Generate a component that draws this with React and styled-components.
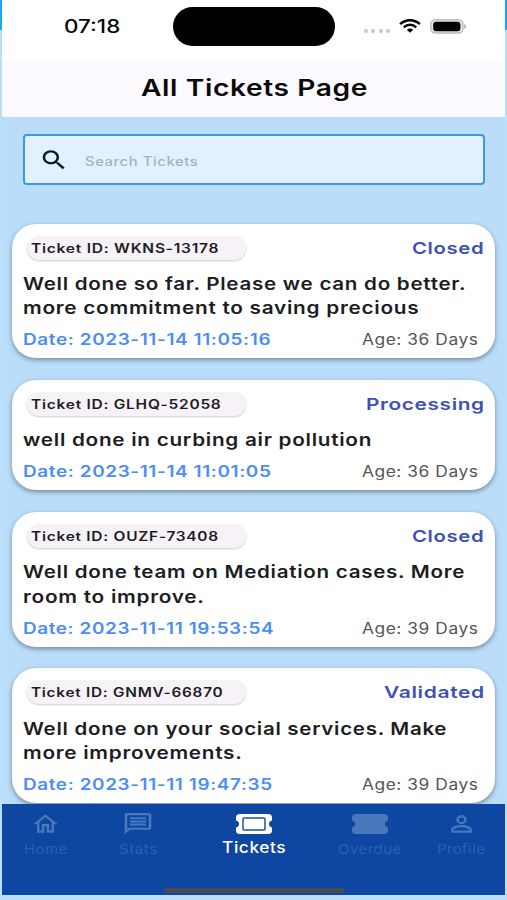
import React, { useLayoutEffect, useRef, useState } from 'react';
import styled, { createGlobalStyle } from 'styled-components';

const tickets = [
    { id: 'WKNS-13178', idWidth: 187, status: 'Closed', statusWidth: 72, lines: [['Well done so far. Please we can do better.', 443], ['more commitment to saving precious', 396]], date: '2023-11-14 11:05:16', dateWidth: 248, age: '36 Days' },
    { id: 'GLHQ-52058', idWidth: 190, status: 'Processing', statusWidth: 118, lines: [['well done in curbing air pollution', 348]], date: '2023-11-14 11:01:05', dateWidth: 248, age: '36 Days' },
    { id: 'OUZF-73408', idWidth: 187, status: 'Closed', statusWidth: 72, lines: [['Well done team on Mediation cases. More', 441], ['room to improve.', 181]], date: '2023-11-11 19:53:54', dateWidth: 250, age: '39 Days' },
    { id: 'GNMV-66870', idWidth: 192, status: 'Validated', statusWidth: 100, lines: [['Well done on your social services. Make', 424], ['more improvements.', 219]], date: '2023-11-11 19:47:35', dateWidth: 249, age: '39 Days' },
];

// sets one line of text to an exact width
function Fit({ width, children }) {
    const ref = useRef(null);
    const [scale, setScale] = useState(1);

    useLayoutEffect(() => {
        const spacing = parseFloat(getComputedStyle(ref.current).letterSpacing) || 0;
        setScale(width / (ref.current.offsetWidth - spacing));
    }, [width])

    return (
        <FitBox $width={width}>
            <FitText ref={ref} style={{ transform: `scaleX(${scale})` }}>{children}</FitText>
        </FitBox>
    );
}

function TicketCard({ ticket }) {
    return (
        <Card>
            <CardTop>
                <TicketId><Fit width={ticket.idWidth}>Ticket ID: {ticket.id}</Fit></TicketId>
                <Status><Fit width={ticket.statusWidth}>{ticket.status}</Fit></Status>
            </CardTop>
            <Message>
                {ticket.lines.map(([text, width]) => (
                    <Fit key={text} width={width}>{text}</Fit>
                ))}
            </Message>
            <CardBottom>
                <TicketDate><Fit width={ticket.dateWidth}>Date: {ticket.date}</Fit></TicketDate>
                <Age><Fit width={116}>Age: {ticket.age}</Fit></Age>
            </CardBottom>
        </Card>
    );
}

export default function App() {
    return (
        <Page>
            <GlobalStyle />
            <Screen>
                <Header>
                    <StatusBar>
                        <Clock><Fit width={56}>07:18</Fit></Clock>
                        <Island />
                        <Signals>
                            <Dots><i /><i /><i /><i /></Dots>
                            <svg width="22" height="14" viewBox="0 0 22 14" fill="none" stroke="#050505" strokeWidth="2.5">
                                <path d="M1.1 5.1C6.8-.1 15.2-.1 20.9 5.1" />
                                <path d="M4.8 8.3c3.6-3.3 8.8-3.3 12.4 0" />
                                <path d="M7.8 10.7c1.8-1.7 4.6-1.7 6.4 0L11 13.7z" fill="#050505" stroke="none" />
                            </svg>
                            <svg width="37" height="15" viewBox="0 0 37 15">
                                <rect x="0.8" y="0.8" width="32.2" height="13.2" rx="4.5" fill="#e4e4e4" stroke="#bdbdbd" strokeWidth="1.4" />
                                <rect x="3.2" y="2.8" width="27.2" height="9.4" rx="3" fill="#000" />
                                <path d="M34.3 5.2c2.4.8 2.4 3.8 0 4.6z" fill="#aaa" />
                            </svg>
                        </Signals>
                    </StatusBar>
                    <Title><Fit width={227}>All Tickets Page</Fit></Title>
                </Header>
                <Search>
                    <svg width="30" height="26" viewBox="0 0 24 24" preserveAspectRatio="none" fill="#10181f">
                        <path d="M15.5 14h-.79l-.28-.27C15.41 12.59 16 11.11 16 9.5 16 5.91 13.09 3 9.5 3S3 5.91 3 9.5 5.91 16 9.5 16c1.61 0 3.09-.59 4.23-1.57l.27.28v.79l5 4.99L20.49 19l-4.99-5zm-6 0C7.01 14 5 11.99 5 9.5S7.01 5 9.5 5 14 7.01 14 9.5 11.99 14 9.5 14z" />
                    </svg>
                    <Placeholder><Fit width={113}>Search Tickets</Fit></Placeholder>
                </Search>
                <List>
                    {tickets.map(t => <TicketCard key={t.id} ticket={t} />)}
                </List>
                <NavBar>
                    <NavItem $width={86}>
                        <NavIcon>
                            <svg width="29" height="26" viewBox="0 0 24 24" preserveAspectRatio="none">
                                <path d="M12 5.69l5 4.5V18h-2v-6H9v6H7v-7.81l5-4.5M12 3L2 12h3v8h6v-6h2v6h6v-8h3L12 3z" />
                            </svg>
                        </NavIcon>
                        <Fit width={43}>Home</Fit>
                    </NavItem>
                    <NavItem $width={100}>
                        <NavIcon>
                            <svg width="32" height="25" viewBox="0 0 24 24" preserveAspectRatio="none">
                                <path d="M4 4h16v12H5.17L4 17.17V4m0-2c-1.1 0-1.99.9-1.99 2L2 22l4-4h14c1.1 0 2-.9 2-2V4c0-1.1-.9-2-2-2H4zm2 10h12v2H6v-2zm0-3h12v2H6V9zm0-3h12v2H6V6z" />
                            </svg>
                        </NavIcon>
                        <Fit width={38}>Stats</Fit>
                    </NavItem>
                    <NavItem $width={132} $active>
                        <NavIcon>
                            <svg width="36" height="20" viewBox="0 0 36 20">
                                <path d="M4 0h28q4 0 4 3.5v3q-3 .8-3 3.5t3 3.5v3q0 3.5-4 3.5H4q-4 0-4-3.5v-3q3-.8 3-3.5T0 6.5v-3Q0 0 4 0z" />
                                <rect x="7" y="4" width="22" height="12" rx="1" fill="none" stroke="#1f539f" strokeWidth="1.5" />
                            </svg>
                        </NavIcon>
                        <Fit width={64}>Tickets</Fit>
                    </NavItem>
                    <NavItem $width={99}>
                        <NavIcon>
                            <svg width="36" height="20" viewBox="0 0 36 20">
                                <path d="M4 0h28q4 0 4 3.5v3q-3 .8-3 3.5t3 3.5v3q0 3.5-4 3.5H4q-4 0-4-3.5v-3q3-.8 3-3.5T0 6.5v-3Q0 0 4 0z" />
                            </svg>
                        </NavIcon>
                        <Fit width={63}>Overdue</Fit>
                    </NavItem>
                    <NavItem $width={84}>
                        <NavIcon>
                            <svg width="31" height="26" viewBox="0 0 24 24" preserveAspectRatio="none">
                                <path d="M12 5.9a2.1 2.1 0 1 1 0 4.2 2.1 2.1 0 0 1 0-4.2m0 9c2.97 0 6.1 1.46 6.1 2.1v1.1H5.9V17c0-.64 3.13-2.1 6.1-2.1M12 4C9.79 4 8 5.79 8 8s1.79 4 4 4 4-1.79 4-4-1.79-4-4-4zm0 9c-2.67 0-8 1.34-8 4v3h16v-3c0-2.66-5.33-4-8-4z" />
                            </svg>
                        </NavIcon>
                        <Fit width={48}>Profile</Fit>
                    </NavItem>
                    <HomeIndicator />
                </NavBar>
            </Screen>
        </Page>
    );
}



//styled components
const GlobalStyle = createGlobalStyle`
    *{
        box-sizing:border-box;
    }
    body{
        margin:0;
        overflow:hidden;
    }
`

const Page = styled.div`
    width:507px;
    height:900px;
    padding:0 2.5px 5px 2px;
    background:linear-gradient(#1ba5f5 30px, #badffa 30px);
    font-family:Inter, "Liberation Sans", sans-serif;
    color:#1d1d1f;
`

const Screen = styled.div`
    height:895px;
    display:flex;
    flex-direction:column;
    overflow:hidden;
    background:#badefa;
`

const FitBox = styled.span`
    display:block;
    width:${p => p.$width}px;
    white-space:nowrap;
`

const FitText = styled.span`
    display:inline-block;
    transform-origin:0 50%;
`

const Header = styled.header`
    height:117px;
    flex:none;
    background:linear-gradient(#fff 58px, #fdfaff 62px);
`

const StatusBar = styled.div`
    height:52px;
    display:flex;
    align-items:center;
    padding-left:62px;
`

const Clock = styled.div`
    width:109px;
    font-size:18px;
    font-weight:500;
    color:#080808;
`

const Island = styled.div`
    width:162px;
    height:39px;
    border-radius:20px;
    background:#000;
`

const Signals = styled.div`
    display:flex;
    align-items:center;
    margin-left:29px;
    svg{
        display:block;
        margin-left:9px;
    }
`

const Dots = styled.div`
    display:flex;
    gap:3.3px;
    padding-top:9px;
    i{
        width:4px;
        height:4px;
        border-radius:50%;
        background:#c8c8c8;
    }
`

const Title = styled.h1`
    margin:0;
    padding:21px 0 0 139px;
    font-size:23px;
    line-height:30px;
    font-weight:600;
    letter-spacing:0.5px;
    color:#0a0a0a;
`

const Search = styled.div`
    flex:none;
    height:51px;
    margin:17px 19.5px 0 21px;
    display:flex;
    align-items:center;
    gap:16px;
    padding-left:14px;
    border:2px solid #3a97ea;
    border-radius:4px;
    background:#e3f1fe;
`

const Placeholder = styled.div`
    padding-top:3px;
    font-size:12.5px;
    font-weight:500;
    letter-spacing:0.5px;
    color:#a5b2bf;
`

const List = styled.main`
    flex:1;
    min-height:0;
    display:flex;
    flex-direction:column;
    gap:21.5px;
    padding:38.5px 9.5px 0 10px;
`

const Card = styled.section`
    flex:none;
    padding:12px 11px 7px;
    border-radius:24px;
    background:#fff;
    box-shadow:0 2px 5px rgba(60, 65, 75, 0.55);
`

const CardTop = styled.div`
    display:flex;
    justify-content:space-between;
    height:24px;
`

const TicketId = styled.div`
    width:219px;
    height:24px;
    margin-left:4px;
    padding-left:3.5px;
    border-radius:12px;
    background:#f6f2f8;
    box-shadow:0 1px 2px rgba(0, 0, 0, 0.2);
    font-size:12.5px;
    line-height:25px;
    font-weight:600;
    letter-spacing:0.6px;
`

const Status = styled.div`
    font-size:16.5px;
    line-height:24px;
    font-weight:600;
    letter-spacing:0.5px;
    color:#3f51b5;
`

const Message = styled.div`
    padding-top:12.3px;
    font-size:17.3px;
    line-height:24.5px;
    font-weight:600;
    letter-spacing:0.6px;
`

const CardBottom = styled.div`
    display:flex;
    justify-content:space-between;
    padding:8.7px 6px 0 0;
    font-size:15.3px;
    line-height:22px;
    letter-spacing:0.5px;
`

const TicketDate = styled.div`
    font-weight:600;
    color:#4c8df5;
`

const Age = styled.div`
    color:#555;
`

const NavBar = styled.nav`
    position:relative;
    flex:none;
    height:91px;
    display:flex;
    background:#0d47a1;
`

const NavItem = styled.div`
    width:${p => p.$width}px;
    display:flex;
    flex-direction:column;
    align-items:center;
    padding-top:6px;
    font-size:${p => p.$active ? 15.3 : 13.3}px;
    line-height:${p => p.$active ? 22 : 24}px;
    font-weight:${p => p.$active ? 500 : 400};
    letter-spacing:0.5px;
    color:${p => p.$active ? '#fff' : '#2c5fb0'};
    svg{
        fill:${p => p.$active ? '#fff' : '#4a78bd'};
    }
`

const NavIcon = styled.div`
    height:27px;
    display:flex;
    align-items:center;
`

const HomeIndicator = styled.div`
    position:absolute;
    left:162px;
    bottom:2px;
    width:180px;
    height:5px;
    border-radius:2px;
    background:#484c52;
`
